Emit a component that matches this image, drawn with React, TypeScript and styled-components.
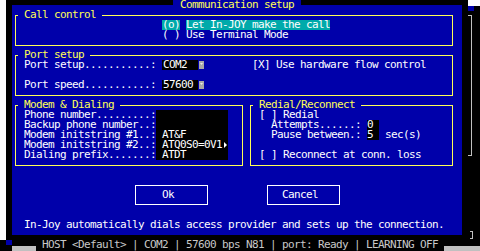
import styled, { createGlobalStyle } from "styled-components";

const BLUE = "#0000aa";
const YELLOW = "#ffff55";
const TEAL = "#00aaaa";
const GRAY = "#c0c0c0";

const GlobalStyle = createGlobalStyle`
  html, body {
    margin: 0;
    padding: 0;
    background: #ffffff;
  }
  body {
    font-family: "DejaVu Sans Mono", "Liberation Mono", monospace;
    font-size: 11px;
    letter-spacing: -0.622px;
    line-height: 10px;
  }
`;

const Screen = styled.div`
  width: 480px;
  height: 251px;
  background: #000;
  display: flex;
  flex-direction: column;
  overflow: hidden;
`;

const Upper = styled.div`
  display: flex;
  height: 240px;
`;

const LeftEdge = styled.div`
  width: 6px;
  background: #ffffff;
`;

const DialogArea = styled.div`
  width: 456px;
  padding: 5px 0 0 6px;
  box-sizing: border-box;
`;

const Dialog = styled.div`
  width: 450px;
  height: 230px;
  background: ${BLUE};
  display: flex;
  flex-direction: column;
  color: #fff;
`;

const TitleTab = styled.div`
  align-self: center;
  margin-top: -5px;
  padding: 0 7px;
  height: 10px;
  background: ${BLUE};
  color: ${YELLOW};
  white-space: pre;
`;

const Groups = styled.div`
  display: flex;
  flex-direction: column;
  padding: 0 9px 0 3px;
`;

const GroupRow = styled.div`
  display: flex;
  gap: 7px;
`;

const Group = styled.fieldset<{ $width?: number }>`
  margin: 0 0 4px;
  padding: 0 0 5px;
  border: 1px solid ${YELLOW};
  min-width: 0;
  ${({ $width }) => ($width ? `width: ${$width}px; flex: none; box-sizing: border-box;` : "flex: 1;")}
`;

const Legend = styled.legend`
  margin-left: 2px;
  padding: 0 6px;
  height: 10px;
  line-height: 10px;
  color: ${YELLOW};
  white-space: pre;
`;

const Row = styled.div<{ $indent?: number }>`
  display: flex;
  height: 10px;
  white-space: pre;
  padding-left: ${({ $indent }) => $indent ?? 8}px;
`;

const Highlight = styled.span<{ $on?: boolean }>`
  background: ${({ $on }) => ($on ? TEAL : "transparent")};
`;

const Gap = styled.span`
  width: 6px;
`;

const Label = styled.span<{ $w: number }>`
  width: ${({ $w }) => $w}px;
  flex: none;
`;

const Combo = styled.span`
  display: flex;
  align-items: center;
  width: 90px;
  flex: none;
`;

const Field = styled.span<{ $w: number }>`
  width: ${({ $w }) => $w}px;
  height: 10px;
  padding-left: 1px;
  box-sizing: border-box;
  background: #000;
  color: #fff;
`;

const DropArrow = () => (
  <svg width="5" height="8" viewBox="0 0 5 8" style={{ marginLeft: 1 }}>
    <rect width="5" height="8" fill="#a8a8a8" />
    <polygon points="1,2 4,2 2.5,4" fill="#e8e8e8" />
  </svg>
);

const ModemBody = styled.div`
  display: flex;
  padding-left: 8px;
`;

const LabelColumn = styled.div`
  width: 132px;
  display: flex;
  flex-direction: column;
`;

const Line = styled.div`
  height: 10px;
  white-space: pre;
  display: flex;
  align-items: center;
`;

const ValuePanel = styled.div`
  width: 72px;
  padding-left: 6px;
  box-sizing: border-box;
  background: #000;
  display: flex;
  flex-direction: column;
`;

const MoreArrow = () => (
  <svg width="6" height="10" viewBox="0 0 6 10">
    <polygon points="2,2 5,5 2,8" fill="#fff" />
  </svg>
);

const SmallField = styled.span`
  width: 12px;
  background: #000;
  flex: none;
`;

const Unit = styled.span`
  margin-left: 6px;
`;

const ButtonRow = styled.div`
  display: flex;
  justify-content: center;
  gap: 59px;
  margin-top: 15px;
`;

const Button = styled.button`
  width: 73px;
  height: 20px;
  padding: 0 6px 0 0;
  border: 1px solid #fff;
  background: transparent;
  color: #fff;
  font: inherit;
  letter-spacing: inherit;
  line-height: 18px;
  text-align: center;
`;

const HelpLine = styled.div`
  margin-top: 15px;
  padding-left: 12px;
  height: 10px;
  white-space: pre;
`;

const Gutter = styled.div`
  width: 18px;
  padding-left: 6px;
  box-sizing: border-box;
  display: flex;
  flex-direction: column;
`;

const TopCap = styled.div`
  height: 6px;
  background: #fff;
`;

const BlueNub = styled.div`
  width: 6px;
  height: 5px;
  background: ${BLUE};
`;

const Bracket = styled.div<{ $h: number; $w: number }>`
  width: ${({ $w }) => $w}px;
  height: ${({ $h }) => $h}px;
  box-sizing: border-box;
  border: 1px solid ${GRAY};
  border-left: none;
`;

const StatusBar = styled.div`
  display: flex;
  height: 11px;
  padding-left: 6px;
`;

const HalfBlock = styled.div<{ $w: number; $color: string; $bottom?: boolean }>`
  width: ${({ $w }) => $w}px;
  height: 5px;
  background: ${({ $color }) => $color};
  align-self: ${({ $bottom }) => ($bottom ? "flex-end" : "flex-start")};
  flex: none;
`;

const StatusText = styled.div`
  margin: 0 6px;
  height: 10px;
  color: #c8c8c8;
  white-space: pre;
`;

const modemLabels = [
  "Phone number.........:",
  "Backup phone number..:",
  "Modem initstring #1..:",
  "Modem initstring #2..:",
  "Dialing prefix.......:",
];

export default function App() {
  return (
    <>
      <GlobalStyle />
      <Screen>
        <Upper>
          <LeftEdge />
          <DialogArea>
            <Dialog>
              <TitleTab>Communication setup</TitleTab>
              <Groups>
                <Group>
                  <Legend>Call control</Legend>
                  <Row $indent={146}>
                    <Highlight $on>(o)</Highlight>
                    <Gap />
                    <Highlight $on>Let In-JOY make the call</Highlight>
                  </Row>
                  <Row $indent={146}>
                    <Highlight>( )</Highlight>
                    <Gap />
                    <Highlight>Use Terminal Mode</Highlight>
                  </Row>
                </Group>

                <Group>
                  <Legend>Port setup</Legend>
                  <Row>
                    <Label $w={138}>Port setup...........:</Label>
                    <Combo>
                      <Field $w={36}>COM2</Field>
                      <DropArrow />
                    </Combo>
                    <span>[X] Use hardware flow control</span>
                  </Row>
                  <Row />
                  <Row>
                    <Label $w={138}>Port speed...........:</Label>
                    <Combo>
                      <Field $w={36}>57600</Field>
                      <DropArrow />
                    </Combo>
                  </Row>
                </Group>

                <GroupRow>
                  <Group $width={228}>
                    <Legend>Modem &amp; Dialing</Legend>
                    <ModemBody>
                      <LabelColumn>
                        {modemLabels.map((l) => (
                          <Line key={l}>{l}</Line>
                        ))}
                      </LabelColumn>
                      <ValuePanel>
                        <Line />
                        <Line />
                        <Line>AT&amp;F</Line>
                        <Line>
                          ATQ0S0=0V1
                          <MoreArrow />
                        </Line>
                        <Line>ATDT</Line>
                      </ValuePanel>
                    </ModemBody>
                  </Group>

                  <Group>
                    <Legend>Redial/Reconnect</Legend>
                    <Row>[ ] Redial</Row>
                    <Row $indent={20}>
                      <Label $w={96}>Attempts......:</Label>
                      <SmallField>0</SmallField>
                    </Row>
                    <Row $indent={20}>
                      <Label $w={96}>Pause between.:</Label>
                      <SmallField>5</SmallField>
                      <Unit>sec(s)</Unit>
                    </Row>
                    <Row />
                    <Row>[ ] Reconnect at conn. loss</Row>
                  </Group>
                </GroupRow>
              </Groups>

              <ButtonRow>
                <Button>Ok</Button>
                <Button>Cancel</Button>
              </ButtonRow>

              <HelpLine>
                In-Joy automatically dials access provider and sets up the connection.
              </HelpLine>
            </Dialog>
          </DialogArea>
          <Gutter>
            <TopCap />
            <BlueNub />
            <Bracket $w={4} $h={141} style={{ marginTop: 4 }} />
            <Bracket $w={3} $h={8} style={{ marginTop: "auto", marginBottom: 1, marginLeft: 2 }} />
          </Gutter>
        </Upper>
        <StatusBar>
          <HalfBlock $w={6} $color={BLUE} />
          <HalfBlock $w={24} $color={GRAY} $bottom />
          <StatusText>HOST &lt;Default&gt; | COM2 | 57600 bps N81 | port: Ready | LEARNING OFF</StatusText>
          <HalfBlock $w={36} $color={GRAY} $bottom style={{ marginLeft: "auto" }} />
        </StatusBar>
      </Screen>
    </>
  );
}
